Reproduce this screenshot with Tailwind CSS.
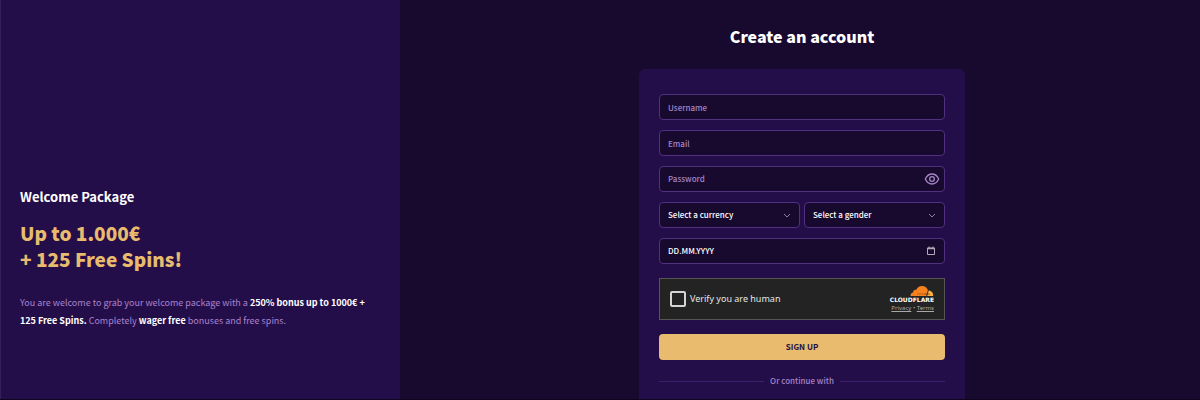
<!DOCTYPE html>
<html lang="en">
<head>
  <meta charset="UTF-8"/>
  <meta name="viewport" content="width=device-width, initial-scale=1.0"/>
  <title>Create an account</title>
  <script src="https://cdn.jsdelivr.net/npm/@tailwindcss/browser@4"></script>
</head>
<body class="bg-[#18092f] text-white font-['Noto_Sans_CJK_JP','Noto_Sans',sans-serif]">
  <div class="flex min-h-screen border-b border-[#10051f]">

    <!-- Welcome offer -->
    <aside class="w-1/3 shrink-0 bg-[#240e49] border-l border-[#351f59] pl-[19px] pr-6 pt-[186px]">
      <h2 class="text-[13px] leading-[22px] font-bold">Welcome Package</h2>
      <p class="mt-3 text-[19px] leading-[26px] font-black text-[#e8bb6e]">Up to 1.000€<br/>+ 125 Free Spins!</p>
      <p class="mt-[22px] text-[9px] leading-[18px] text-[#a983cc]">
        You are welcome to grab your welcome package with a <strong class="font-bold text-white">250% bonus up to 1000€ + 125 Free Spins.</strong>
        Completely <strong class="font-bold text-white">wager free</strong> bonuses and free spins.
      </p>
    </aside>

    <!-- Sign up -->
    <main class="flex-1 flex flex-col items-center pl-1 pt-6">
      <h1 class="text-[16px] leading-6 font-black">Create an account</h1>

      <form class="mt-[21px] flex-1 w-full max-w-[326px] rounded-t-md bg-[#240e49] px-5 pt-[25px] text-[8px]">
        <div class="flex flex-col gap-2.5">
          <input type="text" aria-label="Username" placeholder="Username" class="h-[26px] w-full rounded border border-[#50307f] bg-[#18092f] px-2 font-medium placeholder:text-[#a585c4]"/>
          <input type="email" aria-label="Email" placeholder="Email" class="h-[26px] w-full rounded border border-[#50307f] bg-[#18092f] px-2 font-medium placeholder:text-[#a585c4]"/>
          <div class="flex items-center h-[26px] rounded border border-[#50307f] bg-[#18092f] pl-2 pr-1">
            <input type="password" aria-label="Password" placeholder="Password" class="flex-1 min-w-0 bg-transparent font-medium placeholder:text-[#a585c4]"/>
            <button type="button" aria-label="Show password" class="text-[#a585c4]">
              <svg class="w-4 h-4" viewBox="0 0 24 24" fill="none" stroke="currentColor" stroke-width="2">
                <path d="M2 12s3.500-7.500 10-7.500 10 7.500 10 7.500-3.500 7.500-10 7.500S2 12 2 12z"/>
                <circle cx="12" cy="12" r="3.500"/>
              </svg>
            </button>
          </div>

          <div class="grid grid-cols-2 gap-1 font-medium">
            <div class="grid items-center">
              <select aria-label="Currency" class="col-start-1 row-start-1 appearance-none h-[26px] w-full rounded border border-[#50307f] bg-[#18092f] pl-2 pr-5">
                <option>Select a currency</option>
              </select>
              <svg class="col-start-1 row-start-1 justify-self-end mr-2 w-2.5 h-2.5 text-[#9080a0] pointer-events-none" viewBox="0 0 10 10" fill="none" stroke="currentColor"><path d="M2 4l3 3 3-3"/></svg>
            </div>
            <div class="grid items-center">
              <select aria-label="Gender" class="col-start-1 row-start-1 appearance-none h-[26px] w-full rounded border border-[#50307f] bg-[#18092f] pl-2 pr-5">
                <option>Select a gender</option>
              </select>
              <svg class="col-start-1 row-start-1 justify-self-end mr-2 w-2.5 h-2.5 text-[#9080a0] pointer-events-none" viewBox="0 0 10 10" fill="none" stroke="currentColor"><path d="M2 4l3 3 3-3"/></svg>
            </div>
          </div>

          <div class="flex items-center h-[26px] rounded border border-[#50307f] bg-[#18092f] px-2">
            <input type="text" aria-label="Date of birth" placeholder="DD.MM.YYYY" class="flex-1 min-w-0 bg-transparent font-medium placeholder:text-white"/>
            <button type="button" aria-label="Open calendar" class="text-[#b0aab8]">
              <svg class="w-2.5 h-2.5" viewBox="0 0 10 10" fill="none" stroke="currentColor">
                <path d="M1.500 2h7v6.500h-7z"/>
                <path d="M1.500 2.500h7" stroke-width="1.500"/>
                <path d="M3 .5v2M7 .5v2"/>
              </svg>
            </button>
          </div>
        </div>

        <!-- Captcha -->
        <div class="mt-3.5 h-[42px] flex items-center justify-between border border-[#555555] bg-[#232323] px-2.5 font-['Noto_Sans',sans-serif]">
          <label class="flex items-center gap-1 text-[9px] text-[#e6e6e6]">
            <input type="checkbox" class="appearance-none w-4 h-4 rounded-xs border-2 border-[#d4d4d4]"/>
            Verify you are human
          </label>
          <div class="flex flex-col items-end">
            <svg class="w-12 h-[18px]" viewBox="0 0 48 18" role="img" aria-label="Cloudflare">
              <path fill="#f6821f" d="M24.500 10c-.2-2 1-3.500 2.700-3.600-.2-2 1.400-3 3-2.400C31.200 1.200 33.300 0 36 0c3 0 5.400 1.800 6 4.800L41.200 10z"/>
              <path fill="#fbad41" d="M42.300 4.400c3.200 0 5.200 2.400 4.900 5.600h-6z"/>
              <path stroke="#7a3f10" stroke-width=".5" fill="none" d="M31 8h9"/>
              <path stroke="#232323" stroke-width=".7" fill="none" d="M40.500 10l.8-2.200 1-3.400M39.500 8h4"/>
              <text x="48" y="16" text-anchor="end" font-family="DejaVu Sans" font-weight="700" font-size="6" fill="#ffffff">CLOUDFLARE</text>
            </svg>
            <p class="text-[6px] leading-2 text-[#a8a8a8]"><a href="#" class="underline">Privacy</a> • <a href="#" class="underline">Terms</a></p>
          </div>
        </div>

        <button type="submit" class="mt-3.5 h-[26px] w-full rounded bg-[#e8bb6e] font-bold text-[#240e49]">SIGN UP</button>

        <div class="mt-[13px] flex items-center gap-1.5 leading-4 font-medium text-[#a585c4]">
          <span class="h-px flex-1 bg-[#3d206b]"></span>
          Or continue with
          <span class="h-px flex-1 bg-[#3d206b]"></span>
        </div>
      </form>
    </main>
  </div>
</body>
</html>
